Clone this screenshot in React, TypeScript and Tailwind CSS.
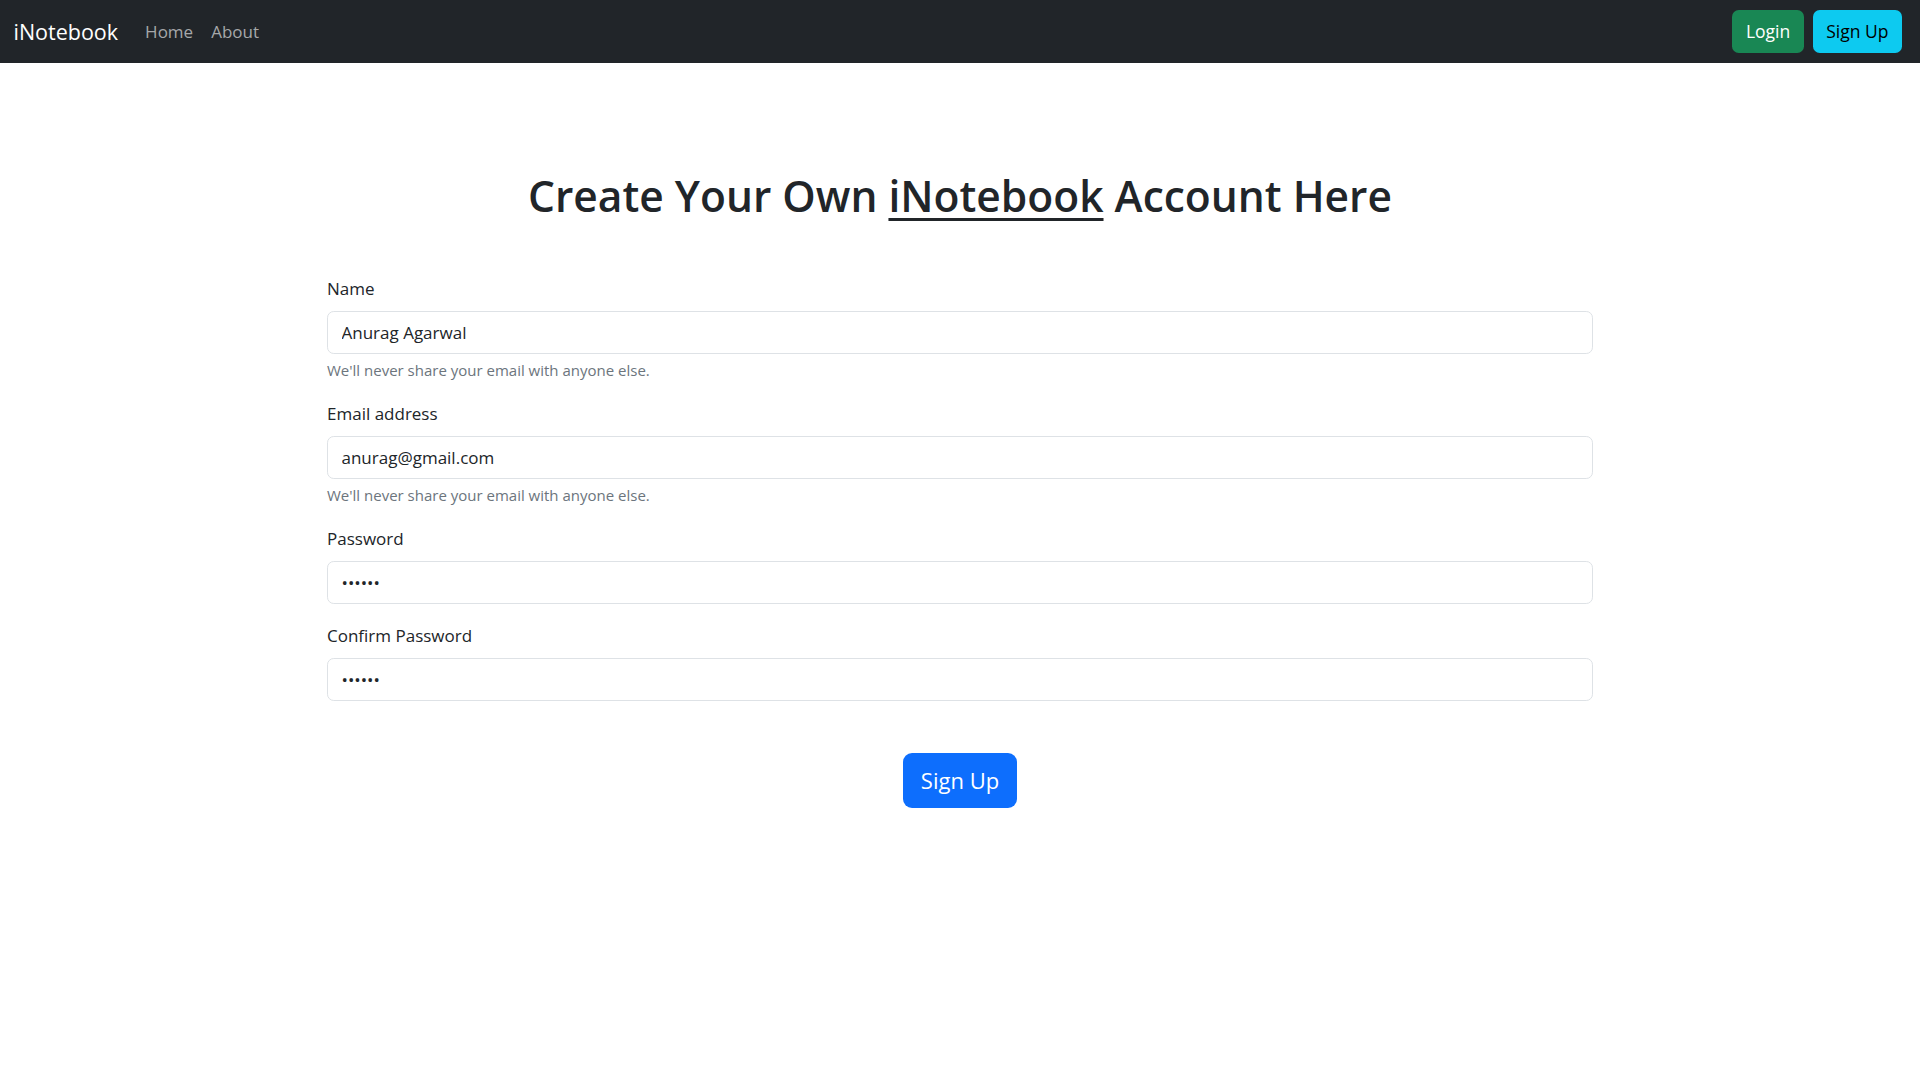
export default function App() {
  const font = { fontFamily: '"Open Sans", "Noto Sans", sans-serif' };

  return (
    <div className="min-h-screen bg-white text-[#212529]" style={font}>
      {/* Navbar */}
      <nav className="h-[63px] bg-[#212529] flex items-center px-[13.5px]">
        <a href="#" className="text-white text-[21.5px] leading-[34px] mr-[18px]">
          iNotebook
        </a>
        <ul className="flex items-center">
          <li>
            <a href="#" className="px-[9px] text-[17px] text-[#a6a8aa]">
              Home
            </a>
          </li>
          <li>
            <a href="#" className="px-[9px] text-[17px] text-[#a6a8aa]">
              About
            </a>
          </li>
        </ul>
        <div className="ml-auto flex items-center">
          <button className="mx-[4.5px] h-[43px] px-[13.5px] rounded-[6.75px] bg-[#198754] text-white text-[17.5px]">
            Login
          </button>
          <button className="mx-[4.5px] h-[43px] px-[13.5px] rounded-[6.75px] bg-[#0dcaf0] text-black text-[17.5px]">
            Sign Up
          </button>
        </div>
      </nav>

      {/* Form */}
      <div className="w-[1266px] mx-auto pt-[106px]">
        <h1 className="text-center text-[42.5px] leading-[54px] font-semibold">
          Create Your Own{' '}
          <a href="#" className="underline underline-offset-[6px] decoration-[3px]">
            iNotebook
          </a>{' '}
          Account Here
        </h1>

        <form className="mt-[52px]">
          <Field label="Name" type="text" value="Anurag Agarwal" help />
          <Field label="Email address" type="email" value="anurag@gmail.com" help />
          <Field label="Password" type="password" value="123456" />
          <Field label="Confirm Password" type="password" value="123456" />

          <div className="flex justify-center pt-[34px]">
            <button
              type="button"
              className="h-[55px] px-[18px] rounded-[9px] bg-[#0d6efd] text-white text-[22px]"
            >
              Sign Up
            </button>
          </div>
        </form>
      </div>
    </div>
  );
}

function Field({
  label,
  type,
  value,
  help,
}: {
  label: string;
  type: string;
  value: string;
  help?: boolean;
}) {
  return (
    <div className="mb-[18px]">
      <label className="block text-[17px] leading-[27px] mb-[9px]">{label}</label>
      <input
        type={type}
        defaultValue={value}
        readOnly
        className="block w-full h-[43px] px-[13.5px] text-[17px] text-[#212529] border border-[#dee2e6] rounded-[6.75px] outline-none"
      />
      {help && (
        <div className="mt-[4.5px] text-[15px] leading-[23.6px] text-[#6c757d]">
          We'll never share your email with anyone else.
        </div>
      )}
    </div>
  );
}
